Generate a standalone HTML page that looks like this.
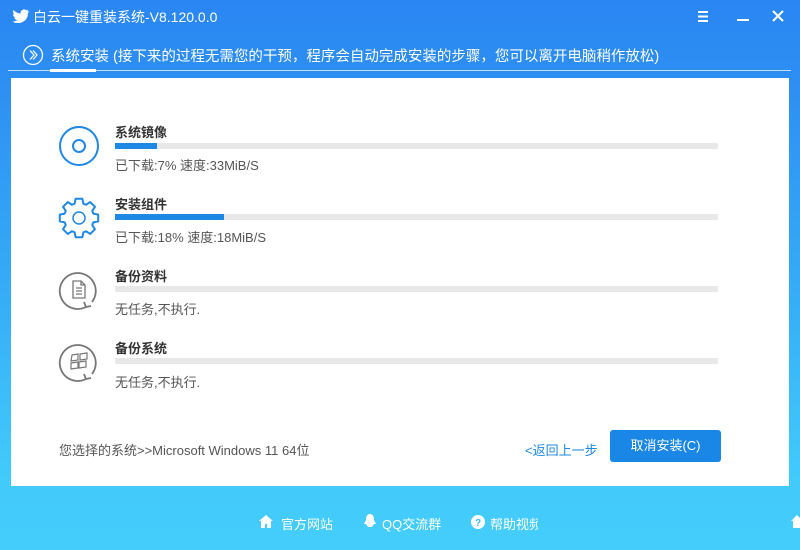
<!DOCTYPE html>
<html><head><meta charset="utf-8"><style>
*{margin:0;padding:0;box-sizing:border-box}
body{width:800px;height:550px;overflow:hidden;position:relative;font-family:"Liberation Sans","Noto Sans CJK SC",sans-serif;background:linear-gradient(180deg,#2a86f3 0%,#2d8ff2 15%,#36aef6 55%,#42c9fb 85%,#44cdfb 100%)}
.abs{position:absolute}
.title{left:33px;top:7px;color:#fff;font-size:14px}
.sub{left:51px;top:45px;color:#fff;font-size:14.5px}
.panel{left:11px;top:78px;width:778px;height:408px;background:#fff}
.t{font-size:13px;color:#333;font-weight:bold}
.s{font-size:13px;color:#555}
.bar{left:115px;width:603px;height:6px;background:#e8e8e8}
.bar i{display:block;height:6px;background:#1e88e5}
.foot{color:#fff;font-size:13px;top:514px}
</style></head><body>
<svg class="abs" style="left:12px;top:9px" width="18" height="14" viewBox="0 0 18 14"><path d="M17 2l-2 .5 1.5-2-2.2.8A3.5 3.5 0 0 0 8.6 4.5 10 10 0 0 1 1.5 1a3.5 3.5 0 0 0 1 4.6L1 5.2a3.5 3.5 0 0 0 2.8 3.4l-1.5.1A3.5 3.5 0 0 0 5.5 11 7 7 0 0 1 .5 12.5 10 10 0 0 0 16 4z" fill="#fff"/></svg>
<div class="abs title">白云一键重装系统-V8.120.0.0</div>
<svg class="abs" style="left:695px;top:9px" width="100" height="16"><g stroke="#fff" stroke-width="2"><path d="M3 3h10M3 7.5h10M3 12h10"/><path d="M42 11h12"/><path d="M78 2l10 10M88 2l-10 10"/></g></svg>
<svg class="abs" style="left:22px;top:44px" width="22" height="22"><circle cx="11" cy="11" r="9.5" fill="none" stroke="#fff" stroke-width="1.3"/><path d="M8 6.5l4 4.5-4 4.5M11 6.5l4 4.5-4 4.5" fill="none" stroke="#fff" stroke-width="1.2"/></svg>
<div class="abs sub">系统安装 (接下来的过程无需您的干预，程序会自动完成安装的步骤，您可以离开电脑稍作放松)</div>
<div class="abs" style="left:8px;top:70px;width:783px;height:1px;background:#bfe0ff"></div>
<div class="abs" style="left:50px;top:69px;width:46px;height:3px;background:#fff"></div>
<div class="abs panel"></div>

<svg class="abs" style="left:58px;top:125px" width="42" height="42"><circle cx="21" cy="21" r="19" fill="none" stroke="#1e88e5" stroke-width="2"/><circle cx="21" cy="21" r="6" fill="none" stroke="#1e88e5" stroke-width="2"/></svg>
<div class="abs t" style="left:115px;top:122px">系统镜像</div>
<div class="abs bar" style="top:143px"><i style="width:42px"></i></div>
<div class="abs s" style="left:115px;top:155px">已下载:7% 速度:33MiB/S</div>

<svg class="abs" style="left:58px;top:197px" width="42" height="42" viewBox="0 0 42 42"><polygon fill="none" stroke="#1e88e5" stroke-width="2" stroke-linejoin="round" points="35.34,16.62 40.2,17.61 40.2,24.39 35.34,25.38 34.25,28.04 36.97,32.19 32.19,36.97 28.04,34.25 25.38,35.34 24.39,40.2 17.61,40.2 16.62,35.34 13.96,34.25 9.81,36.97 5.03,32.19 7.75,28.04 6.66,25.38 1.8,24.39 1.8,17.61 6.66,16.62 7.75,13.96 5.03,9.81 9.81,5.03 13.96,7.75 16.62,6.66 17.61,1.8 24.39,1.8 25.38,6.66 28.04,7.75 32.19,5.03 36.97,9.81 34.25,13.96"/><circle cx="21" cy="21" r="6" fill="none" stroke="#1e88e5" stroke-width="1.5"/></svg>
<div class="abs t" style="left:115px;top:194px">安装组件</div>
<div class="abs bar" style="top:214px"><i style="width:109px"></i></div>
<div class="abs s" style="left:115px;top:227px">已下载:18% 速度:18MiB/S</div>

<svg class="abs" style="left:58px;top:269px" width="42" height="44"><path d="M28 38A18 18 0 1 1 34 33" fill="none" stroke="#777" stroke-width="1.8"/><path d="M26 33l2 5 5-1" fill="none" stroke="#777" stroke-width="1.8"/><path d="M15 12h8l4 4v13H15z M23 12v4h4 M18 19h6M18 22h6M18 25h6" fill="none" stroke="#777" stroke-width="1.3"/></svg>
<div class="abs t" style="left:115px;top:266px">备份资料</div>
<div class="abs bar" style="top:286px"></div>
<div class="abs s" style="left:115px;top:299px">无任务,不执行.</div>

<svg class="abs" style="left:58px;top:341px" width="42" height="44"><path d="M28 38A18 18 0 1 1 34 33" fill="none" stroke="#777" stroke-width="1.8"/><path d="M26 33l2 5 5-1" fill="none" stroke="#777" stroke-width="1.8"/><path d="M14 14l6-1v6l-7 1z M22 13l7-1v6l-7 1z M13 22l7-1v6l-7 1z M21 21l7-1v6l-7 1z" fill="none" stroke="#777" stroke-width="1.2"/></svg>
<div class="abs t" style="left:115px;top:338px">备份系统</div>
<div class="abs bar" style="top:358px"></div>
<div class="abs s" style="left:115px;top:372px">无任务,不执行.</div>

<div class="abs s" style="left:59px;top:440px;color:#555">您选择的系统&gt;&gt;Microsoft Windows 11 64位</div>
<div class="abs" style="left:525px;top:440px;font-size:13px;color:#1e88e5">&lt;返回上一步</div>
<div class="abs" style="left:610px;top:430px;width:111px;height:32px;background:#1a87e6;border-radius:3px;color:#fff;font-size:13px;text-align:center;line-height:32px">取消安装(C)</div>

<svg class="abs" style="left:259px;top:515px" width="14" height="13"><path d="M7 0L0 6h2v7h4V9h2v4h4V6h2z" fill="#fff"/></svg>
<div class="abs foot" style="left:281px">官方网站</div>
<svg class="abs" style="left:363px;top:514px" width="14" height="15"><path d="M7 0C3.5 0 3 3.5 3 6L1 10l2 0c1 2 2 3 4 3s3-1 4-3l2 0-2-4C11 3.5 10.5 0 7 0z" fill="#fff"/></svg>
<div class="abs foot" style="left:382px">QQ交流群</div>
<svg class="abs" style="left:471px;top:515px" width="14" height="14"><circle cx="7" cy="7" r="7" fill="#fff"/><text x="7" y="11" font-size="10" font-weight="bold" text-anchor="middle" fill="#3db8f8" font-family="Liberation Sans">?</text></svg>
<div class="abs foot" style="left:490px;width:48px;overflow:hidden;white-space:nowrap">帮助视频</div>
<svg class="abs" style="left:791px;top:515px" width="12" height="13"><path d="M6 0L0 6h2v7h8V6h2z" fill="#fff"/></svg>
</body></html>
